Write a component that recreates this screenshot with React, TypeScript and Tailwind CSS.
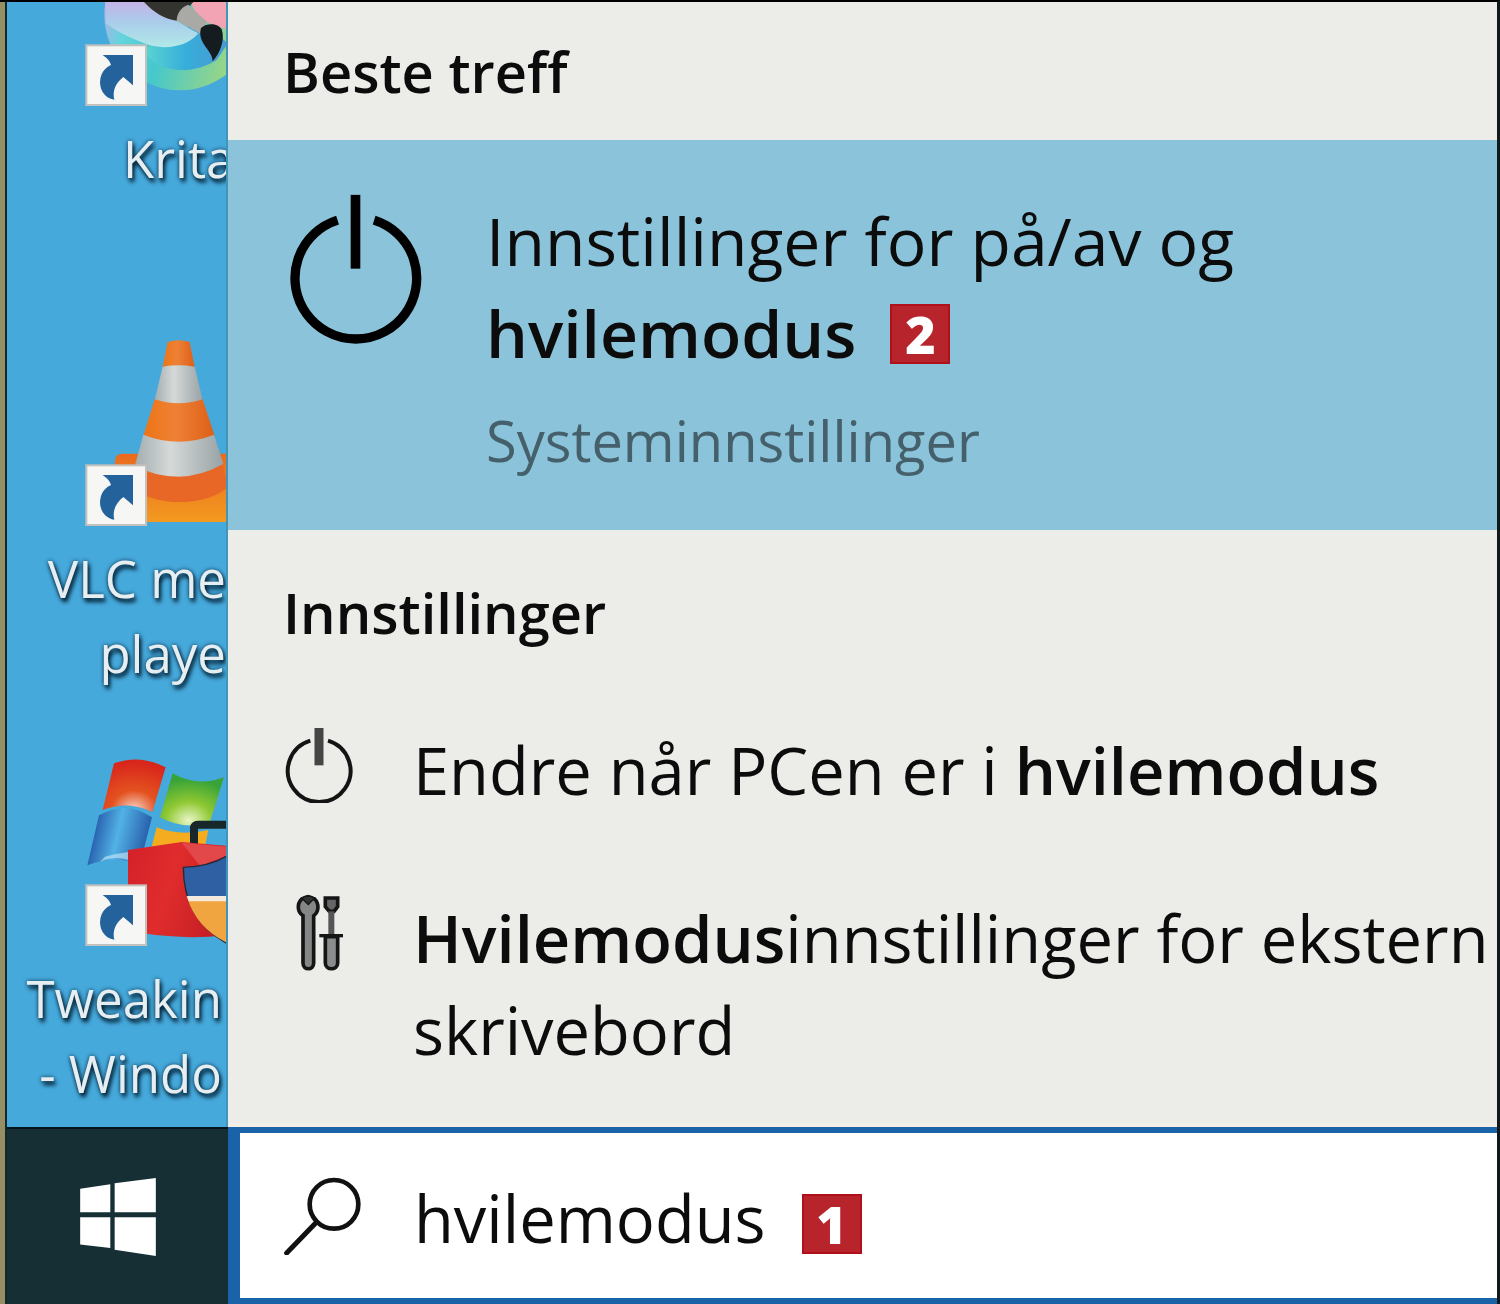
import { useState } from "react";
import type { ReactNode } from "react";

function ShortcutArrow({ y }: { y: number }) {
  return (
    <g transform={`translate(0 ${y})`}>
      <rect x="259" y="136" width="179" height="179" fill="#f6f6f4" stroke="#c3c1bd" strokeWidth="6" />
      <path
        d="M308 165 H399 V256 L370 231 C349 248 336 270 343 299 C312 295 296 264 301 237 C305 214 318 202 333 195 C330 182 318 172 308 165 Z"
        fill="#24629c"
      />
    </g>
  );
}

function KritaIcon() {
  return (
    <svg viewBox="21 6 663 315" className="block h-[105px] w-[221px]" aria-hidden="true">
      <defs>
        <linearGradient id="krita-disc" x1="0" y1="0.5" x2="1" y2="0.8">
          <stop offset="0" stopColor="#a9b6e8" />
          <stop offset="0.15" stopColor="#62d4dc" />
          <stop offset="0.4" stopColor="#45c8cc" />
          <stop offset="0.65" stopColor="#74cfa4" />
          <stop offset="1" stopColor="#b5dc6c" />
        </linearGradient>
        <linearGradient id="krita-wave" x1="0.5" y1="0" x2="0.5" y2="1">
          <stop offset="0" stopColor="#c3b4e8" />
          <stop offset="0.45" stopColor="#a9cdea" />
          <stop offset="1" stopColor="#b2e9e8" />
        </linearGradient>
        <linearGradient id="krita-pool" x1="0" y1="0" x2="1" y2="0">
          <stop offset="0" stopColor="#5cd6d0" />
          <stop offset="0.5" stopColor="#36aedb" />
          <stop offset="1" stopColor="#4c98d0" />
        </linearGradient>
      </defs>
      <circle cx="540" cy="44" r="227" fill="url(#krita-disc)" />
      <path d="M430 150 C470 222 580 226 650 180 L684 130 L600 60 Z" fill="url(#krita-pool)" />
      <path d="M316 6 H470 C500 50 550 75 595 100 C560 142 500 148 450 136 C400 118 350 96 318 70 Z" fill="url(#krita-wave)" />
      <path d="M570 6 H684 V90 L600 60 Z" fill="#f2a3b4" />
      <path d="M432 6 H580 L530 62 C490 56 465 40 432 6 Z" fill="#33342f" />
      <path d="M565 14 L622 66 L600 100 L530 62 C530 40 545 20 565 14 Z" fill="#a9aaa6" />
      <path d="M603 84 C625 66 655 72 665 88 C676 120 660 160 638 184 C638 150 590 130 603 84 Z" fill="#151c20" />
      <ShortcutArrow y={0} />
    </svg>
  );
}

function VlcIcon() {
  return (
    <svg viewBox="21 21 663 600" className="block h-[200px] w-[221px]" aria-hidden="true">
      <defs>
        <linearGradient id="cone-orange" x1="0" y1="0" x2="1" y2="0">
          <stop offset="0" stopColor="#ee7414" />
          <stop offset="0.45" stopColor="#ee8136" />
          <stop offset="1" stopColor="#dd5f17" />
        </linearGradient>
        <linearGradient id="cone-white" x1="0" y1="0" x2="1" y2="0">
          <stop offset="0" stopColor="#a3adb0" />
          <stop offset="0.4" stopColor="#d6d9d8" />
          <stop offset="1" stopColor="#98a2a5" />
        </linearGradient>
        <linearGradient id="cone-base" x1="0" y1="0" x2="0" y2="1">
          <stop offset="0" stopColor="#ea6a1f" />
          <stop offset="1" stopColor="#f39a20" />
        </linearGradient>
      </defs>
      <path d="M345 425 C345 405 355 401 375 401 H684 V606 H345 Z" fill="url(#cone-base)" />
      <path d="M400 470 L660 400 L684 500 C620 560 470 560 410 510 Z" fill="#e86626" />
      <path d="M503 66 Q536 56 569 66 L584 142 Q536 132 488 142 Z" fill="url(#cone-orange)" />
      <path d="M488 140 Q536 132 584 140 L608 240 Q536 264 464 240 Z" fill="url(#cone-white)" />
      <path d="M464 238 Q536 262 608 238 L644 348 Q536 386 430 348 Z" fill="url(#cone-orange)" />
      <path d="M430 344 Q536 386 642 344 L670 432 Q600 470 536 470 Q460 470 405 436 Z" fill="url(#cone-white)" />
      <ShortcutArrow y={300} />
    </svg>
  );
}

function TweakingIcon() {
  return (
    <svg viewBox="21 21 663 600" className="block h-[200px] w-[221px]" aria-hidden="true">
      <defs>
        <radialGradient id="flag-red" cx="0.5" cy="0.95" r="0.9">
          <stop offset="0" stopColor="#f6d0c4" />
          <stop offset="0.4" stopColor="#e4521f" />
          <stop offset="1" stopColor="#d8261c" />
        </radialGradient>
        <radialGradient id="flag-green" cx="0.45" cy="0.9" r="0.8">
          <stop offset="0" stopColor="#eaf6c8" />
          <stop offset="0.45" stopColor="#8fc832" />
          <stop offset="1" stopColor="#37a338" />
        </radialGradient>
        <linearGradient id="flag-blue" x1="0" y1="0.2" x2="1" y2="0.4">
          <stop offset="0.1" stopColor="#2358a8" />
          <stop offset="0.5" stopColor="#52b2e6" />
          <stop offset="1" stopColor="#2458a6" />
        </linearGradient>
        <linearGradient id="toolbox" x1="0" y1="0" x2="1" y2="0.3">
          <stop offset="0" stopColor="#d3212a" />
          <stop offset="0.5" stopColor="#e02c2c" />
          <stop offset="1" stopColor="#c62026" />
        </linearGradient>
      </defs>
      <path d="M342 70 Q420 42 497 82 L457 216 Q384 180 308 210 Z" fill="url(#flag-red)" />
      <path d="M518 100 Q590 142 672 112 L630 245 Q560 274 480 232 Z" fill="url(#flag-green)" />
      <path d="M297 226 Q380 180 456 232 L420 372 Q340 346 262 376 Z" fill="url(#flag-blue)" />
      <path d="M300 366 Q340 345 385 360 L390 335 Q350 340 315 350 Z" fill="#cfe9f6" opacity="0.6" />
      <path d="M470 262 Q540 290 625 270 L615 320 H455 Z" fill="#f5ad1f" />
      <path d="M582 312 V262 Q584 254 596 254 H684" fill="none" stroke="#17272a" strokeWidth="24" />
      <path d="M384 330 L545 306 L684 318 V585 Q560 600 430 580 L384 480 Z" fill="url(#toolbox)" />
      <path d="M545 308 L684 320 V346 L600 378 Z" fill="#e2474a" />
      <path d="M684 346 Q630 380 550 382 Q550 540 684 612 Z" fill="#2f60a4" stroke="#222a38" strokeWidth="4" />
      <path d="M561 472 H684 V610 Q590 566 561 472 Z" fill="#f1a540" />
      <path d="M560 468 H684 V484 H566 Z" fill="#f3e9dc" />
      <ShortcutArrow y={300} />
    </svg>
  );
}

function LargePowerIcon() {
  return (
    <svg viewBox="57 46 400 450" className="h-[150px] w-[133px] shrink-0" fill="none" stroke="#000" aria-hidden="true">
      <path d="M203 124 A183 183 0 1 0 313 124" strokeWidth="28" />
      <path d="M257 48 V270" strokeWidth="29" />
    </svg>
  );
}

function PowerIcon() {
  return (
    <svg viewBox="45 50 204 228" className="h-[76px] w-[68px]" fill="none" aria-hidden="true">
      <path d="M121 91 A94 94 0 1 0 174 91" stroke="#141414" strokeWidth="12" />
      <path d="M147 53 V165" stroke="#454545" strokeWidth="27" />
    </svg>
  );
}

function ToolsIcon() {
  return (
    <svg viewBox="70 550 150 234" className="h-[78px] w-[50px]" fill="none" stroke="#141616" aria-hidden="true">
      <path
        d="M97 615 C80 605 78 580 93 565 L112 558 L132 565 C147 580 144 605 129 615 V757 C129 780 97 780 97 757 Z"
        fill="#858786"
        strokeWidth="11"
      />
      <path d="M93 562 Q112 550 132 562 L113 582 Z" fill="#303232" strokeWidth="4" />
      <path d="M164 562 H201 V588 L190 602 H176 L164 588 Z" fill="#666" strokeWidth="11" />
      <path d="M182 602 V675" stroke="#555" strokeWidth="18" />
      <path d="M146 675 H217" strokeWidth="10" />
      <path d="M164 678 H201 V757 C201 780 164 780 164 757 Z" fill="#8b8d8c" strokeWidth="11" />
    </svg>
  );
}

function SearchIcon() {
  return (
    <svg viewBox="850 200 234 234" className="h-[78px] w-[78px] shrink-0" fill="none" stroke="#111" aria-hidden="true">
      <circle cx="1000" cy="282" r="73" strokeWidth="14" />
      <path d="M948 335 L858 428" strokeWidth="15" strokeLinecap="round" />
    </svg>
  );
}

function WindowsLogo() {
  return (
    <svg viewBox="237 203 226 233" className="h-[78px] w-[76px]" fill="#fff" aria-hidden="true">
      <path d="M237 235 L327 222 V305 H237 Z" />
      <path d="M340 219 L463 203 V305 H340 Z" />
      <path d="M237 320 H327 V412 L237 402 Z" />
      <path d="M340 320 H463 V436 L340 417 Z" />
    </svg>
  );
}

function StepBadge({ children }: { children: ReactNode }) {
  return (
    <span className="inline-flex h-[60px] w-[60px] shrink-0 items-center justify-center border-2 border-[#b0101a] bg-[#b7242b] text-[52px] leading-none font-extrabold text-white">
      {children}
    </span>
  );
}

function DesktopIcon({ icon, lines, align }: { icon: ReactNode; lines: string[]; align: string }) {
  return (
    <button type="button" className="block w-full text-left">
      {icon}
      <span
        className={`mt-[14px] block h-[154px] text-[51px] leading-[75px] whitespace-nowrap text-[#e6eef1] [text-shadow:2px_4px_4px_#001c2e,0_0_4px_#0b3a58] ${align}`}
      >
        {lines.map((line) => (
          <span key={line} className="block">
            {line}
          </span>
        ))}
      </span>
    </button>
  );
}

function ResultRow({ icon, children }: { icon: ReactNode; children: ReactNode }) {
  return (
    <button type="button" className="flex w-full items-start pl-[57px] text-left">
      <span className="flex h-[82px] w-[68px] shrink-0 items-center justify-center">{icon}</span>
      <span className="ml-[60px] text-[65px] leading-[92px] whitespace-nowrap">{children}</span>
    </button>
  );
}

export default function App() {
  const [query, setQuery] = useState("hvilemodus");

  return (
    <div className="flex min-h-screen flex-col overflow-hidden border-t-2 border-r-3 border-t-black border-r-[#10181a] bg-[#ecede8] font-['Open_Sans','Noto_Sans',sans-serif] text-[#0c0c0c]">
      <div className="flex grow border-l-5 border-[#968f63]">
        <div className="flex min-w-0 grow flex-col border-l-2 border-[#14282c]">
          <div className="flex grow">
            <nav className="flex w-[221px] shrink-0 flex-col gap-[52px] overflow-hidden border-r-2 border-[#4295b8] bg-[#46a9db]">
              <DesktopIcon icon={<KritaIcon />} lines={["Krita"]} align="pl-[116px]" />
              <DesktopIcon icon={<VlcIcon />} lines={["VLC me", "playe"]} align="text-right" />
              <DesktopIcon icon={<TweakingIcon />} lines={["Tweakin", "- Windo"]} align="pr-1 text-right" />
            </nav>

            <main className="min-w-0 grow overflow-hidden border-b-3 border-[#f3efe6]">
              <h2 className="flex h-[138px] items-center pl-[55px] text-[56px] font-semibold">Beste treff</h2>

              <button
                type="button"
                className="flex h-[390px] w-full items-start bg-[#8bc4da] pt-[54px] pl-[61px] text-left"
              >
                <LargePowerIcon />
                <span className="ml-[64px] block">
                  <span className="block text-[66px] leading-[92px]">
                    Innstillinger for på/av og
                    <span className="flex items-center gap-[34px]">
                      <b className="font-semibold">hvilemodus</b>
                      <span className="flex pt-1">
                        <StepBadge>2</StepBadge>
                      </span>
                    </span>
                  </span>
                  <span className="mt-[24px] block text-[56px] leading-[76px] text-[#45606b]">Systeminnstillinger</span>
                </span>
              </button>

              <h2 className="flex h-[164px] items-center pl-[55px] text-[56px] font-semibold">Innstillinger</h2>

              <div className="flex flex-col gap-[76px] pt-[30px]">
                <ResultRow icon={<PowerIcon />}>
                  Endre når PCen er i <b className="font-semibold">hvilemodus</b>
                </ResultRow>
                <ResultRow icon={<ToolsIcon />}>
                  <b className="font-semibold">Hvilemodus</b>innstillinger for ekstern
                  <br />
                  skrivebord
                </ResultRow>
              </div>
            </main>
          </div>

          <div className="flex h-[177px] shrink-0">
            <button
              type="button"
              aria-label="Start"
              className="flex w-[221px] shrink-0 items-center justify-center border-t-2 border-[#041418] bg-[#152f35]"
            >
              <WindowsLogo />
            </button>
            <label className="flex min-w-0 grow items-center border-t-6 border-b-6 border-l-12 border-[#1a63a8] bg-[#fefffe] pl-[44px]">
              <SearchIcon />
              <input
                type="text"
                aria-label="Search"
                value={query}
                onChange={(e) => setQuery(e.target.value)}
                className="ml-[52px] field-sizing-content pt-1 text-[65px] leading-[92px] outline-none"
              />
              <span className="ml-[36px] flex pt-4">
                <StepBadge>1</StepBadge>
              </span>
            </label>
          </div>
        </div>
      </div>
    </div>
  );
}
